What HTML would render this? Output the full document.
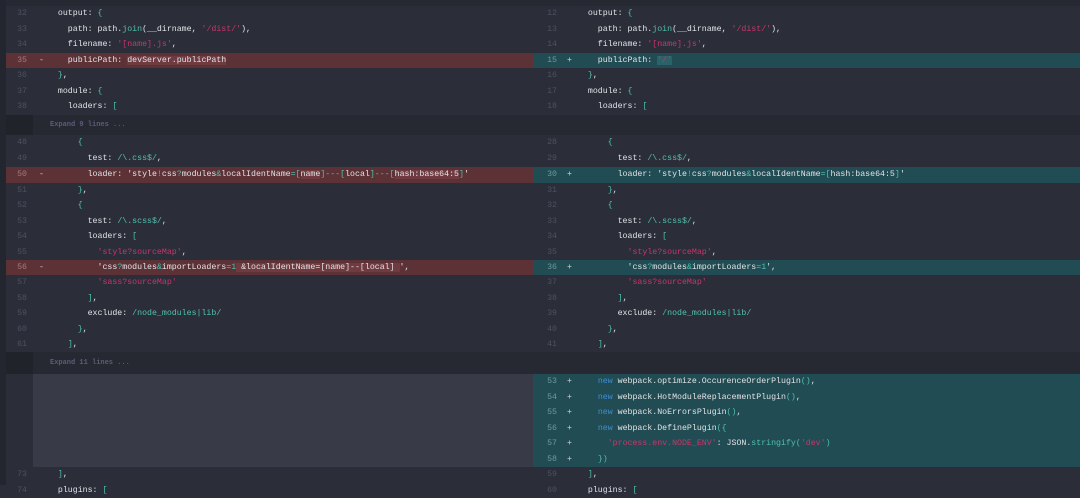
<!DOCTYPE html>
<html><head><meta charset="utf-8"><style>
*{margin:0;padding:0;box-sizing:border-box}
body{width:1080px;height:485px;overflow:hidden;background:#2b2e39;font-family:"Liberation Mono",monospace;font-size:8.25px;color:#e2e3e6;position:relative}
.n{position:absolute;width:27px;text-align:right;color:#4d5160;height:15.5px;line-height:15.5px}
.s{position:absolute;color:#cfd0d6}
.c{position:absolute;white-space:pre}
.k{color:#4fc1b0}.p{color:#c8366a}.b{color:#3d8fd6}
.hr{background:#6f3b40}.ha{background:#2b6168}
</style></head><body>
<div style="position:absolute;left:0;top:0;width:1080px;height:6px;background:#262932"></div>
<div style="position:absolute;left:0;top:0;width:6px;height:485px;background:#23262e"></div>
<div style="position:absolute;left:6px;top:114.5px;width:1074px;height:20.5px;background:#262931"></div>
<div style="position:absolute;left:6px;top:114.5px;width:27px;height:20.5px;background:#202329"></div>
<div class="c" style="left:50px;top:114.5px;line-height:20.5px;color:#5a5e78;font-size:7px;font-weight:bold">Expand 9 lines ...</div>
<div style="position:absolute;left:6px;top:352px;width:1074px;height:22px;background:#262931"></div>
<div style="position:absolute;left:6px;top:352px;width:27px;height:22px;background:#202329"></div>
<div class="c" style="left:50px;top:352px;line-height:22px;color:#5a5e78;font-size:7px;font-weight:bold">Expand 11 lines ...</div>
<div style="position:absolute;left:6px;top:52.5px;width:527px;height:15.5px;background:#5c3237"></div>
<div style="position:absolute;left:6px;top:167px;width:527px;height:15.5px;background:#5c3237"></div>
<div style="position:absolute;left:6px;top:259.5px;width:527px;height:15.5px;background:#5c3237"></div>
<div style="position:absolute;left:533px;top:52.5px;width:547px;height:15.5px;background:#214c53"></div>
<div style="position:absolute;left:533px;top:167px;width:547px;height:15.5px;background:#214c53"></div>
<div style="position:absolute;left:533px;top:259.5px;width:547px;height:15.5px;background:#214c53"></div>
<div style="position:absolute;left:533px;top:374px;width:547px;height:93px;background:#214c53"></div>
<div style="position:absolute;left:33px;top:374px;width:500px;height:93px;background:#383b47"></div>

<div class="n" style="left:0;top:6px">32</div><div class="c" style="left:48px;top:6px;line-height:15.5px">  output: <span class="k">{</span></div>
<div class="n" style="left:0;top:21.5px">33</div><div class="c" style="left:48px;top:21.5px;line-height:15.5px">    path: path.<span class="k">join</span>(__dirname, <span class="p">'/dist/'</span>),</div>
<div class="n" style="left:0;top:37px">34</div><div class="c" style="left:48px;top:37px;line-height:15.5px">    filename: <span class="p">'[name].js'</span>,</div>
<div class="n" style="left:0;top:52.5px;color:#a9787c">35</div><div class="s" style="left:39px;top:52.5px;line-height:15.5px">-</div><div class="c" style="left:48px;top:52.5px;line-height:15.5px">    publicPath: <span class="hr">devServer.publicPath</span></div>
<div class="n" style="left:0;top:68px">36</div><div class="c" style="left:48px;top:68px;line-height:15.5px">  <span class="k">}</span>,</div>
<div class="n" style="left:0;top:83.5px">37</div><div class="c" style="left:48px;top:83.5px;line-height:15.5px">  module: <span class="k">{</span></div>
<div class="n" style="left:0;top:99px">38</div><div class="c" style="left:48px;top:99px;line-height:15.5px">    loaders: <span class="k">[</span></div>

<div class="n" style="left:0;top:135px">48</div><div class="c" style="left:48px;top:135px;line-height:15.5px">      <span class="k">{</span></div>
<div class="n" style="left:0;top:150.5px">49</div><div class="c" style="left:48px;top:150.5px;line-height:15.5px">        test: <span class="k">/\.css$/</span>,</div>
<div class="n" style="left:0;top:167px;color:#a9787c">50</div><div class="s" style="left:39px;top:167px;line-height:15.5px">-</div><div class="c" style="left:48px;top:167px;line-height:15.5px">        loader: 'style<span class="k">!</span>css<span class="k">?</span>modules<span class="k">&amp;</span>localIdentName<span class="k">=[</span><span class="hr">name</span><span class="k">]---[</span>local<span class="k">]---[</span><span class="hr">hash:base64:5</span><span class="k">]</span>'</div>
<div class="n" style="left:0;top:182.5px">51</div><div class="c" style="left:48px;top:182.5px;line-height:15.5px">      <span class="k">}</span>,</div>
<div class="n" style="left:0;top:198px">52</div><div class="c" style="left:48px;top:198px;line-height:15.5px">      <span class="k">{</span></div>
<div class="n" style="left:0;top:213.5px">53</div><div class="c" style="left:48px;top:213.5px;line-height:15.5px">        test: <span class="k">/\.scss$/</span>,</div>
<div class="n" style="left:0;top:229px">54</div><div class="c" style="left:48px;top:229px;line-height:15.5px">        loaders: <span class="k">[</span></div>
<div class="n" style="left:0;top:244.5px">55</div><div class="c" style="left:48px;top:244.5px;line-height:15.5px">          <span class="p">'style?sourceMap'</span>,</div>
<div class="n" style="left:0;top:259.5px;color:#a9787c">56</div><div class="s" style="left:39px;top:259.5px;line-height:15.5px">-</div><div class="c" style="left:48px;top:259.5px;line-height:15.5px">          'css<span class="k">?</span>modules<span class="k">&amp;</span>importLoaders<span class="k">=1</span><span class="hr"> &amp;localIdentName=[name]--[local] </span>',</div>
<div class="n" style="left:0;top:275px">57</div><div class="c" style="left:48px;top:275px;line-height:15.5px">          <span class="p">'sass?sourceMap'</span></div>
<div class="n" style="left:0;top:290.5px">58</div><div class="c" style="left:48px;top:290.5px;line-height:15.5px">        <span class="k">]</span>,</div>
<div class="n" style="left:0;top:306px">59</div><div class="c" style="left:48px;top:306px;line-height:15.5px">        exclude: <span class="k">/node_modules|lib/</span></div>
<div class="n" style="left:0;top:321.5px">60</div><div class="c" style="left:48px;top:321.5px;line-height:15.5px">      <span class="k">}</span>,</div>
<div class="n" style="left:0;top:337px">61</div><div class="c" style="left:48px;top:337px;line-height:15.5px">    <span class="k">]</span>,</div>
<div class="n" style="left:0;top:467px">73</div><div class="c" style="left:48px;top:467px;line-height:15.5px">  <span class="k">]</span>,</div>
<div class="n" style="left:0;top:482.5px">74</div><div class="c" style="left:48px;top:482.5px;line-height:15.5px">  plugins: <span class="k">[</span></div>

<div class="n" style="left:530px;top:6px">12</div><div class="c" style="left:578px;top:6px;line-height:15.5px">  output: <span class="k">{</span></div>
<div class="n" style="left:530px;top:21.5px">13</div><div class="c" style="left:578px;top:21.5px;line-height:15.5px">    path: path.<span class="k">join</span>(__dirname, <span class="p">'/dist/'</span>),</div>
<div class="n" style="left:530px;top:37px">14</div><div class="c" style="left:578px;top:37px;line-height:15.5px">    filename: <span class="p">'[name].js'</span>,</div>
<div class="n" style="left:530px;top:52.5px;color:#6b9a9e">15</div><div class="s" style="left:567px;top:52.5px;line-height:15.5px">+</div><div class="c" style="left:578px;top:52.5px;line-height:15.5px">    publicPath: <span class="ha p">'/'</span></div>
<div class="n" style="left:530px;top:68px">16</div><div class="c" style="left:578px;top:68px;line-height:15.5px">  <span class="k">}</span>,</div>
<div class="n" style="left:530px;top:83.5px">17</div><div class="c" style="left:578px;top:83.5px;line-height:15.5px">  module: <span class="k">{</span></div>
<div class="n" style="left:530px;top:99px">18</div><div class="c" style="left:578px;top:99px;line-height:15.5px">    loaders: <span class="k">[</span></div>

<div class="n" style="left:530px;top:135px">28</div><div class="c" style="left:578px;top:135px;line-height:15.5px">      <span class="k">{</span></div>
<div class="n" style="left:530px;top:150.5px">29</div><div class="c" style="left:578px;top:150.5px;line-height:15.5px">        test: <span class="k">/\.css$/</span>,</div>
<div class="n" style="left:530px;top:167px;color:#6b9a9e">30</div><div class="s" style="left:567px;top:167px;line-height:15.5px">+</div><div class="c" style="left:578px;top:167px;line-height:15.5px">        loader: 'style<span class="k">!</span>css<span class="k">?</span>modules<span class="k">&amp;</span>localIdentName<span class="k">=[</span>hash:base64:5<span class="k">]</span>'</div>
<div class="n" style="left:530px;top:182.5px">31</div><div class="c" style="left:578px;top:182.5px;line-height:15.5px">      <span class="k">}</span>,</div>
<div class="n" style="left:530px;top:198px">32</div><div class="c" style="left:578px;top:198px;line-height:15.5px">      <span class="k">{</span></div>
<div class="n" style="left:530px;top:213.5px">33</div><div class="c" style="left:578px;top:213.5px;line-height:15.5px">        test: <span class="k">/\.scss$/</span>,</div>
<div class="n" style="left:530px;top:229px">34</div><div class="c" style="left:578px;top:229px;line-height:15.5px">        loaders: <span class="k">[</span></div>
<div class="n" style="left:530px;top:244.5px">35</div><div class="c" style="left:578px;top:244.5px;line-height:15.5px">          <span class="p">'style?sourceMap'</span>,</div>
<div class="n" style="left:530px;top:259.5px;color:#6b9a9e">36</div><div class="s" style="left:567px;top:259.5px;line-height:15.5px">+</div><div class="c" style="left:578px;top:259.5px;line-height:15.5px">          'css<span class="k">?</span>modules<span class="k">&amp;</span>importLoaders<span class="k">=1</span>',</div>
<div class="n" style="left:530px;top:275px">37</div><div class="c" style="left:578px;top:275px;line-height:15.5px">          <span class="p">'sass?sourceMap'</span></div>
<div class="n" style="left:530px;top:290.5px">38</div><div class="c" style="left:578px;top:290.5px;line-height:15.5px">        <span class="k">]</span>,</div>
<div class="n" style="left:530px;top:306px">39</div><div class="c" style="left:578px;top:306px;line-height:15.5px">        exclude: <span class="k">/node_modules|lib/</span></div>
<div class="n" style="left:530px;top:321.5px">40</div><div class="c" style="left:578px;top:321.5px;line-height:15.5px">      <span class="k">}</span>,</div>
<div class="n" style="left:530px;top:337px">41</div><div class="c" style="left:578px;top:337px;line-height:15.5px">    <span class="k">]</span>,</div>

<div class="n" style="left:530px;top:374px;color:#6b9a9e">53</div><div class="s" style="left:567px;top:374px;line-height:15.5px">+</div><div class="c" style="left:578px;top:374px;line-height:15.5px">    <span class="b">new</span> webpack.optimize.OccurenceOrderPlugin<span class="k">()</span>,</div>
<div class="n" style="left:530px;top:389.5px;color:#6b9a9e">54</div><div class="s" style="left:567px;top:389.5px;line-height:15.5px">+</div><div class="c" style="left:578px;top:389.5px;line-height:15.5px">    <span class="b">new</span> webpack.HotModuleReplacementPlugin<span class="k">()</span>,</div>
<div class="n" style="left:530px;top:405px;color:#6b9a9e">55</div><div class="s" style="left:567px;top:405px;line-height:15.5px">+</div><div class="c" style="left:578px;top:405px;line-height:15.5px">    <span class="b">new</span> webpack.NoErrorsPlugin<span class="k">()</span>,</div>
<div class="n" style="left:530px;top:420.5px;color:#6b9a9e">56</div><div class="s" style="left:567px;top:420.5px;line-height:15.5px">+</div><div class="c" style="left:578px;top:420.5px;line-height:15.5px">    <span class="b">new</span> webpack.DefinePlugin<span class="k">({</span></div>
<div class="n" style="left:530px;top:436px;color:#6b9a9e">57</div><div class="s" style="left:567px;top:436px;line-height:15.5px">+</div><div class="c" style="left:578px;top:436px;line-height:15.5px">      <span class="p">'process.env.NODE_ENV'</span>: JSON.<span class="k">stringify(</span><span class="p">'dev'</span><span class="k">)</span></div>
<div class="n" style="left:530px;top:451.5px;color:#6b9a9e">58</div><div class="s" style="left:567px;top:451.5px;line-height:15.5px">+</div><div class="c" style="left:578px;top:451.5px;line-height:15.5px">    <span class="k">})</span></div>
<div class="n" style="left:530px;top:467px">59</div><div class="c" style="left:578px;top:467px;line-height:15.5px">  <span class="k">]</span>,</div>
<div class="n" style="left:530px;top:482.5px">60</div><div class="c" style="left:578px;top:482.5px;line-height:15.5px">  plugins: <span class="k">[</span></div>
</body></html>
